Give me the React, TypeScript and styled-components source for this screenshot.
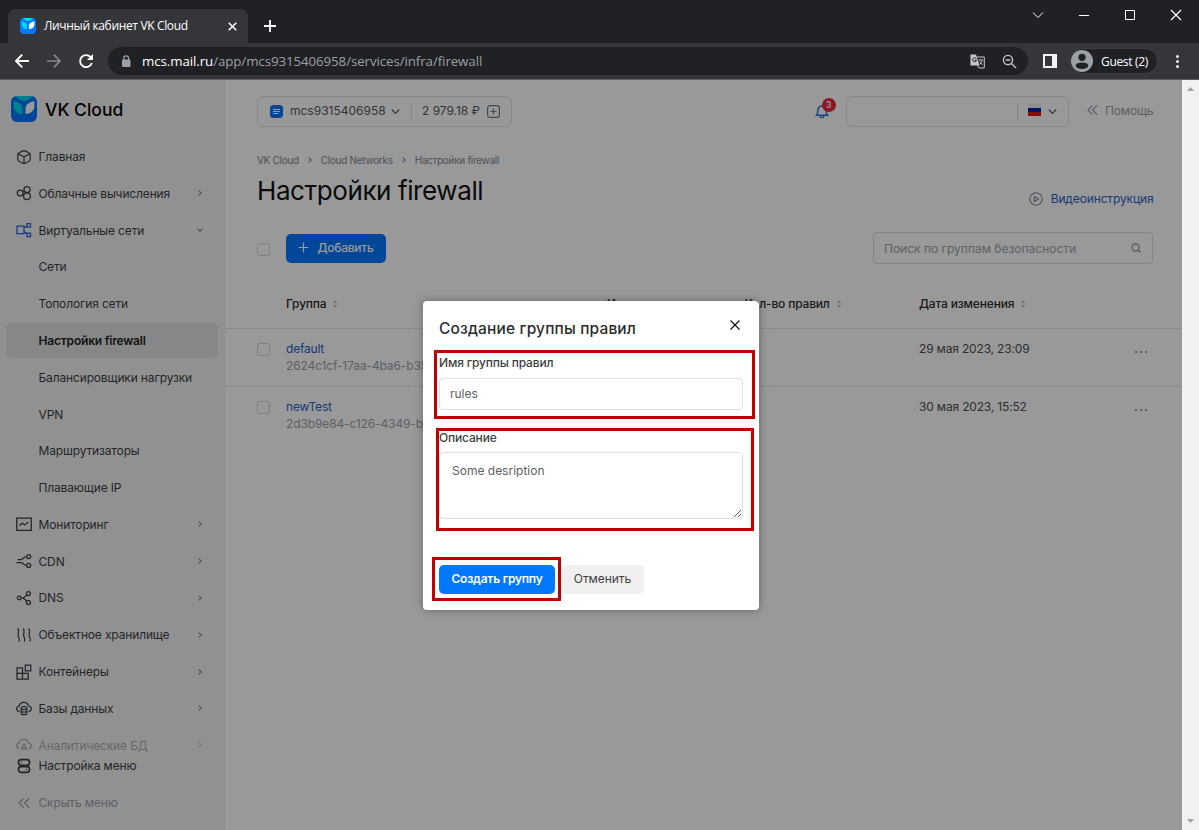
import React from "react";
import styled, { createGlobalStyle, css } from "styled-components";

const GlobalStyle = createGlobalStyle`
  *, *::before, *::after { box-sizing: border-box; }
  body { margin: 0; background: #fff; overflow: hidden; font-family: Inter, sans-serif; }
  svg { display: block; flex: none; }
  button, input, textarea { font-family: inherit; }
`;

/* ---------- browser window ---------- */
const Window = styled.div`
  display: flex;
  flex-direction: column;
  width: 1199px;
  height: 830px;
  overflow: hidden;
`;
const TabStrip = styled.div`
  display: flex;
  height: 43px;
  padding-left: 8px;
  background: #202124;
  font-family: "Open Sans", sans-serif;
`;
const Tab = styled.div`
  display: flex;
  align-items: center;
  width: 240px;
  height: 34px;
  margin-top: 9px;
  padding: 0 11.5px 0 12px;
  border-radius: 8px 8px 0 0;
  background: #35363a;
`;
const TabTitle = styled.span`
  flex: 1;
  margin-left: 8px;
  padding-bottom: 1px;
  color: #fff;
  font-size: 12px;
  letter-spacing: -0.35px;
  white-space: nowrap;
`;
const NewTab = styled.div`
  margin: 20px 0 0 16px;
`;
const WindowControls = styled.div`
  display: flex;
  margin: 9px 17px 0 auto;
  gap: 34px;
`;
const Toolbar = styled.div`
  display: flex;
  align-items: center;
  height: 37px;
  padding: 0 15px 0 14px;
  border-bottom: 1px solid #5b5d61;
  background: #35363a;
  font-family: "Open Sans", sans-serif;
`;
const NavIcons = styled.div`
  display: flex;
  gap: 16px;
`;
const AddressBar = styled.div`
  display: flex;
  align-items: center;
  width: 920px;
  height: 28px;
  margin-left: 14px;
  padding: 0 11px 0 13px;
  border-radius: 14px;
  background: #202124;
`;
const Url = styled.span`
  flex: 1;
  margin-left: 11px;
  color: #9aa0a6;
  font-size: 13.3px;
  letter-spacing: -0.08px;
  white-space: nowrap;
  b { color: #fff; font-weight: 400; }
`;
const AddressIcons = styled.div`
  display: flex;
  align-items: center;
  gap: 17px;
`;
const SidePanelIcon = styled.div`
  width: 14px;
  height: 14px;
  margin-left: 15px;
  border: 2px solid #f1f3f4;
  border-right-width: 5px;
`;
const Profile = styled.div`
  display: flex;
  align-items: center;
  gap: 8px;
  width: 88px;
  height: 26px;
  margin-left: 13px;
  border: 1px solid #3c4043;
  border-radius: 13px;
  background: #202124;
  color: #fff;
  font-size: 12px;
  letter-spacing: -0.33px;
  white-space: nowrap;
`;
const Kebab = styled.div`
  display: grid;
  gap: 2px;
  margin-left: auto;
  margin-right: 5px;
  i { width: 3px; height: 3px; border-radius: 50%; background: #f1f3f4; }
`;
const Viewport = styled.div`
  display: flex;
  flex: 1;
  min-height: 0;
`;
const Page = styled.div`
  position: relative;
  display: flex;
  width: 1182px;
  background: #fff;
`;
const ScrollTrack = styled.div`
  display: flex;
  flex-direction: column;
  align-items: center;
  justify-content: space-between;
  width: 17px;
  padding: 7px 0;
  background: #f1f1f1;
`;

/* ---------- sidebar ---------- */
const Sidebar = styled.aside`
  display: flex;
  flex-direction: column;
  width: 225px;
  background: #f2f2f3;
  border-right: 1px solid #eeeff0;
`;
const Brand = styled.div`
  display: flex;
  align-items: center;
  gap: 8px;
  height: 58.2px;
  padding: 0 0 0.5px 11px;
  color: #000;
  font-size: 17.5px;
  font-weight: 500;
  span { padding-top: 1px; }
`;
const Menu = styled.nav`
  display: flex;
  flex-direction: column;
  height: 616px;
  overflow: hidden;
`;
const MenuRow = styled.div<{ $active?: boolean; $faded?: boolean; $muted?: boolean }>`
  display: flex;
  flex: none;
  align-items: center;
  height: 35px;
  margin: 0.9px 6px 0.9px 6px;
  padding: 0 15.5px 0 9px;
  border-radius: 5px;
  color: ${(p) => (p.$muted ? "#99a2ad" : "#3c3f43")};
  font-size: 12px;
  letter-spacing: -0.15px;
  white-space: nowrap;
  ${(p) => p.$faded && css`opacity: 0.4;`}
  ${(p) => p.$active && css`
    background: #e1e1e2;
    color: #222;
    font-weight: 600;
    letter-spacing: -0.2px;
  `}
`;
const MenuIcon = styled.span<{ $blue?: boolean }>`
  width: 18px;
  margin-right: 5.5px;
  color: ${(p) => (p.$blue ? "#2a5fd5" : "inherit")};
`;
const MenuLabel = styled.span`
  flex: 1;
`;
const MenuArrow = styled.span`
  color: #848c96;
`;
const MenuFooter = styled.div`
  display: flex;
  flex-direction: column;
  margin-top: -6.6px;
`;

/* ---------- main column ---------- */
const Main = styled.main`
  flex: 1;
  min-width: 0;
`;
const TopBar = styled.div`
  display: flex;
  align-items: center;
  height: 31px;
  margin: 16px 28.6px 0 32px;
`;
const OutlineBox = styled.div<{ $w: number }>`
  display: flex;
  align-items: center;
  width: ${(p) => p.$w}px;
  height: 31px;
  border: 1px solid #e1e3e6;
  border-radius: 6px;
  color: #55585c;
  font-size: 12px;
  white-space: nowrap;
`;
const ProjectBadge = styled.span`
  display: grid;
  align-content: center;
  gap: 1px;
  width: 13px;
  height: 13px;
  margin: 0 7px 0 12px;
  padding-left: 3px;
  border-radius: 3.5px;
  background: #07f;
  i { width: 7px; height: 1px; background: #fff; }
  i:last-child { width: 5px; }
`;
const ProjectName = styled.span`
  width: 101px;
  padding-bottom: 2px;
`;
const BoxDivider = styled.span`
  width: 1px;
  height: 16px;
  margin: 0 10px 0 11px;
  background: #dcdee1;
`;
const Balance = styled.span`
  margin-right: 7px;
  padding-bottom: 2px;
  letter-spacing: -0.03px;
`;
const Bell = styled.div`
  position: relative;
  margin: 0 17px 0 auto;
  color: #2a6fd5;
`;
const Badge = styled.span`
  position: absolute;
  top: -6px;
  left: 7px;
  width: 14px;
  height: 14px;
  border-radius: 50%;
  background: #e9273c;
  color: #fff;
  font-size: 8.5px;
  font-weight: 600;
  line-height: 14px;
  text-align: center;
`;
const Flag = styled.span`
  display: flex;
  flex-direction: column;
  width: 13px;
  height: 12px;
  margin: 0 7px 3px 0;
  background: #eee;
  padding-top: 4px;
  i { height: 4px; background: #0024b0; }
  i:last-child { background: #e01708; }
`;
const BoxEnd = styled.div`
  display: flex;
  align-items: center;
  margin-left: auto;
  margin-right: 11px;
`;
const Help = styled.div`
  display: flex;
  align-items: center;
  gap: 7px;
  margin-left: 18.2px;
  padding-bottom: 3px;
  color: #99a2ad;
  font-size: 12px;
  letter-spacing: -0.15px;
`;
const Crumbs = styled.div`
  display: flex;
  align-items: center;
  gap: 8px;
  height: 16px;
  margin: 24.5px 0 0.5px 32px;
  color: #7d8793;
  font-size: 10px;
  letter-spacing: -0.3px;
`;
const TitleRow = styled.div`
  display: flex;
  align-items: flex-start;
  justify-content: space-between;
  height: 64px;
  margin: 0 28.5px 0 32px;
`;
const Title = styled.h1`
  margin: 7px 0 0;
  color: #111;
  font-size: 26px;
  font-weight: 400;
  line-height: 32px;
  letter-spacing: -0.4px;
`;
const VideoLink = styled.a`
  display: flex;
  align-items: center;
  gap: 8px;
  height: 20px;
  margin-top: 20.6px;
  color: #2a5fc2;
  font-size: 12px;
  letter-spacing: -0.13px;
  svg { color: #848c96; }
`;
const Checkbox = styled.span`
  width: 13px;
  height: 13px;
  border: 1px solid #d3d6da;
  border-radius: 3px;
`;
const Actions = styled.div`
  display: flex;
  align-items: center;
  height: 32px;
  margin: 0 29px 0 32px;
  ${Checkbox} { margin-top: 2px; }
`;
const AddButton = styled.button`
  display: flex;
  align-items: center;
  gap: 9px;
  width: 100px;
  height: 29px;
  margin: 1px auto 0 16px;
  padding: 0 0 2px 11.5px;
  border: 0;
  border-radius: 5px;
  background: #07f;
  color: #fff;
  font-size: 12px;
  font-weight: 500;
  letter-spacing: -0.25px;
`;
const Search = styled.div`
  display: flex;
  align-items: center;
  justify-content: space-between;
  width: 280px;
  height: 32px;
  padding: 0 11px 0 10px;
  border: 1px solid #dcdee2;
  border-radius: 4px;
  color: #99a2ad;
  font-size: 12px;
`;
const columns = "29px 321px 137.5px 174.5px 1fr 13px";
const HeadRow = styled.div`
  display: grid;
  grid-template-columns: ${columns};
  align-items: center;
  height: 65px;
  padding: 16px 34px 1px 32px;
  border-bottom: 1px solid #e7e8ec;
  color: #2c2d2e;
  font-size: 12px;
  font-weight: 500;
  letter-spacing: -0.17px;
`;
const HeadCell = styled.span`
  display: flex;
  align-items: center;
  gap: 7px;
  white-space: nowrap;
`;
const Row = styled.div<{ $last?: boolean }>`
  display: grid;
  grid-template-columns: ${columns};
  height: 58px;
  padding: 11px 34px 0 32px;
  border-bottom: 1px solid ${(p) => (p.$last ? "transparent" : "#e7e8ec")};
  color: #4c4f53;
  font-size: 12px;
  line-height: 17px;
  letter-spacing: -0.17px;
  ${Checkbox} { margin-top: 3px; }
`;
const GroupName = styled.div`
  color: #2a5fc2;
  letter-spacing: -0.2px;
`;
const GroupId = styled.div`
  color: #99a2ad;
  letter-spacing: -0.12px;
  white-space: nowrap;
`;
const DateCell = styled.div`
  grid-column: 5;
`;
const Dots = styled.div`
  display: flex;
  gap: 3px;
  margin-top: 11px;
  i { width: 2px; height: 2px; background: #99a2ad; }
`;

/* ---------- dialog ---------- */
const Overlay = styled.div`
  position: absolute;
  inset: 0;
  display: flex;
  align-items: center;
  justify-content: center;
  padding-top: 1px;
  background: rgba(0, 0, 0, 0.4);
`;
const Dialog = styled.div`
  position: relative;
  display: flex;
  flex-direction: column;
  width: 336px;
  height: 309px;
  padding: 16px;
  border-radius: 4px;
  background: #fff;
  box-shadow: 0 0 8px rgba(0, 0, 0, 0.35);
`;
const DialogHead = styled.div`
  display: flex;
  justify-content: space-between;
  height: 37px;
`;
const DialogTitle = styled.h2`
  margin: 0;
  color: #2c2d2e;
  font-size: 15.5px;
  font-weight: 500;
  line-height: 23px;
  letter-spacing: 0.15px;
  white-space: nowrap;
`;
const CloseIcon = styled.div`
  margin: 3px 3px 0 0;
  color: #111;
`;
const Label = styled.label<{ $line: number }>`
  height: 24px;
  color: #3c3f43;
  font-size: 12px;
  font-weight: 500;
  line-height: ${(p) => p.$line}px;
  letter-spacing: -0.17px;
`;
const Input = styled.input`
  width: 304px;
  height: 32px;
  margin-bottom: 18px;
  padding: 0 10px 1px;
  border: 1px solid #dcdfe6;
  border-radius: 4px;
  outline: 0;
  color: #5c5f63;
  font-size: 12px;
`;
const Textarea = styled.textarea`
  width: 304px;
  height: 67px;
  margin: 0 0 46px;
  padding: 8px 12px;
  border: 1px solid #dcdfe6;
  border-radius: 4px;
  outline: 0;
  color: #5c5f63;
  font-size: 12px;
  line-height: 19px;
`;
const Buttons = styled.div`
  display: flex;
  gap: 6px;
`;
const Button = styled.button<{ $primary?: boolean }>`
  width: ${(p) => (p.$primary ? 116 : 83)}px;
  height: 29px;
  padding: 0 0 2px;
  border: 0;
  border-radius: 5px;
  background: ${(p) => (p.$primary ? "#07f" : "#f0f0f0")};
  color: ${(p) => (p.$primary ? "#fff" : "#3c3f43")};
  font-size: 12px;
  font-weight: ${(p) => (p.$primary ? 600 : 400)};
  letter-spacing: ${(p) => (p.$primary ? -0.23 : -0.05)}px;
  white-space: nowrap;
`;
const Highlight = styled.div<{ $x: number; $y: number; $w: number; $h: number }>`
  position: absolute;
  left: ${(p) => p.$x}px;
  top: ${(p) => p.$y}px;
  width: ${(p) => p.$w}px;
  height: ${(p) => p.$h}px;
  border: 3px solid #c00000;
  pointer-events: none;
`;

/* ---------- icons ---------- */
const Logo = ({ size }: { size: number }) => (
  <svg width={size} height={size} viewBox="0 0 26 26">
    <rect width="26" height="26" rx="6" fill="#07f" />
    <path d="M4.500 0H21.500C19.500 2.500 16.500 4.600 13 5C9.500 4.600 6.500 2.500 4.500 0Z" fill="#00d9e9" />
    <path d="M2.600 5.300C7 5.800 11.500 8.500 11.500 12.500V18C7 18 2.600 15 2.600 10Z" fill="#00d9e9" />
    <path d="M23.400 5.300C19 5.800 14.500 8.500 14.500 12.500V18C19 18 23.400 15 23.400 10Z" fill="#fff" />
  </svg>
);

const Chevron = ({ dir, size = 6, w = 1.1 }: { dir: "right" | "down"; size?: number; w?: number }) => (
  <svg width={size} height={size} viewBox="0 0 6 6" fill="none" stroke="currentColor" strokeWidth={w} strokeLinecap="round" strokeLinejoin="round">
    <path d={dir === "right" ? "M2 .8L4.300 3L2 5.200" : "M.8 2L3 4.200L5.200 2"} />
  </svg>
);

const DoubleLeft = () => (
  <svg width="11" height="12" viewBox="0 0 11 12" fill="none" stroke="currentColor" strokeWidth="1.200">
    <path d="M5.300 1.500L1 6L5.300 10.500M10 1.500L5.700 6L10 10.500" />
  </svg>
);

const Sort = () => (
  <svg width="4" height="8" viewBox="0 0 4 8" fill="#a5adb7">
    <path d="M0 2.700L2 .5L4 2.700ZM0 5.300L2 7.500L4 5.300Z" />
  </svg>
);

const shapes: Record<string, React.ReactNode> = {
  home: <path d="M7.800 2.900Q9 2.300 10.200 2.900L14.200 5Q15.200 5.600 15.200 6.700V11.300Q15.200 12.400 14.200 13L10.200 15.200Q9 15.800 7.800 15.200L3.800 13Q2.800 12.400 2.800 11.300V6.700Q2.800 5.600 3.800 5ZM3.200 5.800L9 8.800L14.800 5.800M9 8.800V15.300" />,
  cloud: (
    <>
      <circle cx="5.200" cy="9" r="2.900" />
      <circle cx="12" cy="5.600" r="3.100" />
      <circle cx="12" cy="12.300" r="3.400" />
      <path d="M7.500 7.400L9.200 7M7.500 10.600L8.900 11" />
    </>
  ),
  network: <path d="M2 5H9V12.500H2ZM12 2.500H15.500V6H12ZM12 12H15.500V15.500H12ZM9 7L12 5M9 10.500L12 13" />,
  monitor: <path d="M1.700 3.200H16.300V15.300H1.700ZM4.500 10.800L7.200 8L9.700 10L13.300 7" />,
  cdn: (
    <>
      <circle cx="13.700" cy="4.600" r="2" />
      <circle cx="13.700" cy="13.400" r="2" />
      <path d="M11.700 4.600C8 4.600 8.500 7.500 6 7.500H2.500M11.700 13.400C8 13.400 8.500 10.700 6 10.700H1.500" />
    </>
  ),
  dns: (
    <>
      <circle cx="4.200" cy="9" r="1.800" />
      <circle cx="13.400" cy="4.500" r="2" />
      <circle cx="13.400" cy="13.500" r="2" />
      <path d="M6 9H8L12 6M8 9L12 12" />
    </>
  ),
  storage: <path d="M2.800 2.500C5.300 5.500 1.500 8.500 3.800 11.500C4.500 12.600 4.500 14 4 15.500M8.300 2.500C10.800 5.500 7 8.500 9.300 11.500C10 12.600 10 14 9.500 15.500M13.800 2.500C16.300 5.500 12.500 8.500 14.800 11.500C15.500 12.600 15.500 14 15 15.500" />,
  containers: <path d="M2 4.800H7.500V16H2ZM2 10.300H13.300V16H2M7.500 10.300V16M10.300 2.200H15.800V7.800H10.300Z" />,
  database: (
    <>
      <path d="M4.500 12.500C1 12 .8 7.800 4 7C5.500 2.500 12 2 13.500 7C17.300 7.600 17.300 12 13.500 12.500" />
      <ellipse cx="9" cy="9" rx="2.800" ry="1.500" />
      <path d="M6.200 9V14.200C6.200 16.200 11.800 16.200 11.800 14.200V9M6.200 11.700C6.200 13.500 11.800 13.500 11.800 11.700" />
    </>
  ),
  analytics: <path d="M4.500 12.500C1 12 .8 7.800 4 7C5.500 2.500 12 2 13.500 7C17.300 7.600 17.300 12 13.500 12.500M6.500 14.500L8.300 8H9.700L11.500 14.500M7.200 12.300H10.800" />,
  settings: (
    <>
      <rect x="3.500" y="2.700" width="11" height="5.600" rx="2.500" strokeWidth="1.700" />
      <rect x="3.500" y="9.700" width="11" height="5.600" rx="2.500" strokeWidth="1.700" />
      <path d="M6 5.500H7M11 12.500H12" />
    </>
  ),
  hide: <path d="M8.500 4.500L4 9L8.500 13.500M14 4.500L9.500 9L14 13.500" />,
};

const Glyph = ({ name }: { name: string }) => (
  <svg width="18" height="18" viewBox="0 0 18 18" fill="none" stroke="currentColor" strokeWidth="1.250">
    {shapes[name]}
  </svg>
);

type Item = { label: string; icon?: string; arrow?: "right" | "down"; active?: boolean; faded?: boolean; muted?: boolean; blue?: boolean };

const menu: Item[] = [
  { label: "Главная", icon: "home" },
  { label: "Облачные вычисления", icon: "cloud", arrow: "right" },
  { label: "Виртуальные сети", icon: "network", arrow: "down", blue: true },
  { label: "Сети" },
  { label: "Топология сети" },
  { label: "Настройки firewall", active: true },
  { label: "Балансировщики нагрузки" },
  { label: "VPN" },
  { label: "Маршрутизаторы" },
  { label: "Плавающие IP" },
  { label: "Мониторинг", icon: "monitor", arrow: "right" },
  { label: "CDN", icon: "cdn", arrow: "right" },
  { label: "DNS", icon: "dns", arrow: "right" },
  { label: "Объектное хранилище", icon: "storage", arrow: "right" },
  { label: "Контейнеры", icon: "containers", arrow: "right" },
  { label: "Базы данных", icon: "database", arrow: "right" },
  { label: "Аналитические БД", icon: "analytics", arrow: "right", faded: true },
];
const footer: Item[] = [
  { label: "Настройка меню", icon: "settings" },
  { label: "Скрыть меню", icon: "hide", muted: true },
];

const renderItem = (it: Item) => (
  <MenuRow key={it.label} $active={it.active} $faded={it.faded} $muted={it.muted}>
    <MenuIcon $blue={it.blue}>{it.icon && <Glyph name={it.icon} />}</MenuIcon>
    <MenuLabel>{it.label}</MenuLabel>
    {it.arrow && <MenuArrow><Chevron dir={it.arrow} /></MenuArrow>}
  </MenuRow>
);

const rows = [
  { name: "default", id: "2624c1cf-17aa-4ba6-b35", date: "29 мая 2023, 23:09" },
  { name: "newTest", id: "2d3b9e84-c126-4349-b", date: "30 мая 2023, 15:52" },
];

export default function App() {
  return (
    <Window>
      <GlobalStyle />
      <TabStrip>
        <Tab>
          <Logo size={16} />
          <TabTitle>Личный кабинет VK Cloud</TabTitle>
          <svg width="9" height="9" viewBox="0 0 9 9" stroke="#fff" strokeWidth="1.500"><path d="M.7 .7L8.300 8.300M8.300 .7L.7 8.300" /></svg>
        </Tab>
        <NewTab>
          <svg width="12" height="12" viewBox="0 0 12 12" stroke="#fff" strokeWidth="1.800"><path d="M6 0V12M0 6H12" /></svg>
        </NewTab>
        <WindowControls>
          <svg width="12" height="12" viewBox="0 0 12 12" fill="none" stroke="#fff"><path d="M1 3.500L6 8.500L11 3.500" /></svg>
          <svg width="12" height="12" viewBox="0 0 12 12" stroke="#fff"><path d="M1 6.500H11" /></svg>
          <svg width="12" height="12" viewBox="0 0 12 12" fill="none" stroke="#fff"><path d="M1.500 1.500H10.500V10.500H1.500Z" /></svg>
          <svg width="12" height="12" viewBox="0 0 12 12" stroke="#fff" strokeWidth="1.200"><path d="M1 1L11 11M11 1L1 11" /></svg>
        </WindowControls>
      </TabStrip>
      <Toolbar>
        <NavIcons>
          <svg width="16" height="16" viewBox="0 0 16 16" fill="none" stroke="#fff" strokeWidth="1.900"><path d="M15 8H2.500M8.200 1.700L2 8L8.200 14.300" /></svg>
          <svg width="16" height="16" viewBox="0 0 16 16" fill="none" stroke="#85878a" strokeWidth="1.700"><path d="M1 8H13.500M7.800 1.700L14 8L7.800 14.300" /></svg>
          <svg width="16" height="16" viewBox="0 0 16 16" fill="none" stroke="#fff" strokeWidth="1.900"><path d="M13.800 10A6 6 0 1 1 12.500 4L14 5.500" /><path d="M15 1V7H9Z" fill="#fff" stroke="none" /></svg>
        </NavIcons>
        <AddressBar>
          <svg width="10" height="13" viewBox="0 0 10 13"><rect x="1" y="4.500" width="8.500" height="7.500" rx="1" fill="#9aa0a6" /><path d="M2.800 5V3.200A2.400 2.400 0 0 1 7.600 3.200V5" fill="none" stroke="#9aa0a6" strokeWidth="1.300" /></svg>
          <Url><b>mcs.mail.ru</b>/app/mcs9315406958/services/infra/firewall</Url>
          <AddressIcons>
            <svg width="15" height="15" viewBox="0 0 15 15">
              <path d="M.5 .5H6L9.500 11.500H.5Z" fill="#c4c7c9" />
              <path d="M7 3H14.300V14H9L7.500 11.500" fill="none" stroke="#c4c7c9" />
              <path d="M6.300 4.800A2 2 0 1 0 6.500 6.300H4.500" fill="none" stroke="#202124" />
              <path d="M8.500 6H13M10.700 5V6M12.300 6C12 8.500 10 10 9.500 10.500M9.500 7.500L12.500 11" fill="none" stroke="#c4c7c9" strokeWidth=".9" />
            </svg>
            <svg width="15" height="15" viewBox="0 0 15 15" fill="none" stroke="#c4c7c9" strokeWidth="1.400"><circle cx="6" cy="6" r="4.600" /><path d="M9.500 9.500L14 14M3.700 6H8.300" /></svg>
          </AddressIcons>
        </AddressBar>
        <SidePanelIcon />
        <Profile>
          <svg width="22" height="22" viewBox="0 0 22 22"><circle cx="11" cy="11" r="11" fill="#9aa0a6" /><circle cx="11" cy="7.300" r="3.600" fill="#202124" /><ellipse cx="11" cy="15.700" rx="6.300" ry="3.300" fill="#202124" /></svg>
          Guest (2)
        </Profile>
        <Kebab><i /><i /><i /></Kebab>
      </Toolbar>
      <Viewport>
        <Page>
          <Sidebar>
            <Brand><Logo size={26} /><span>VK Cloud</span></Brand>
            <Menu>{menu.map(renderItem)}</Menu>
            <MenuFooter>{footer.map(renderItem)}</MenuFooter>
          </Sidebar>
          <Main>
            <TopBar>
              <OutlineBox $w={255}>
                <ProjectBadge><i /><i /><i /></ProjectBadge>
                <ProjectName>mcs9315406958</ProjectName>
                <Chevron dir="down" size={9} w={0.8} />
                <BoxDivider />
                <Balance>2 979.18 ₽</Balance>
                <svg width="13" height="13" viewBox="0 0 13 13" fill="none" stroke="#6d7885" strokeWidth="1.200"><rect x=".6" y=".6" width="11.800" height="11.800" rx="2.500" /><path d="M6.500 3.500V9.500M3.500 6.500H9.500" /></svg>
              </OutlineBox>
              <Bell>
                <svg width="14" height="15" viewBox="0 0 14 15" fill="none" stroke="currentColor" strokeWidth="1.400"><path d="M1.500 11.200C3 9.500 2.800 8 3 6C3.300 3.500 4.800 2 7 2C9.200 2 10.700 3.500 11 6C11.200 8 11 9.500 12.500 11.200ZM5 11.500C5.200 14.300 8.800 14.300 9 11.500" /></svg>
                <Badge>3</Badge>
              </Bell>
              <OutlineBox $w={223}>
                <BoxEnd>
                  <BoxDivider />
                  <Flag><i /><i /></Flag>
                  <Chevron dir="down" size={9} w={0.8} />
                </BoxEnd>
              </OutlineBox>
              <Help><DoubleLeft />Помощь</Help>
            </TopBar>
            <Crumbs>
              <span>VK Cloud</span><Chevron dir="right" />
              <span>Cloud Networks</span><Chevron dir="right" />
              <span>Настройки firewall</span>
            </Crumbs>
            <TitleRow>
              <Title>Настройки firewall</Title>
              <VideoLink>
                <svg width="14" height="14" viewBox="0 0 14 14" fill="none" stroke="currentColor" strokeWidth="1.100"><circle cx="7" cy="7" r="6.200" /><path d="M5.300 4.500L9.500 7L5.300 9.500Z" /></svg>
                Видеоинструкция
              </VideoLink>
            </TitleRow>
            <Actions>
              <Checkbox />
              <AddButton>
                <svg width="11" height="11" viewBox="0 0 11 11" stroke="#fff" strokeWidth="1.200"><path d="M5.500 .5V10.500M.5 5.500H10.500" /></svg>
                Добавить
              </AddButton>
              <Search>
                Поиск по группам безопасности
                <svg width="10" height="10" viewBox="0 0 10 10" fill="none" stroke="#848c96" strokeWidth="1.100"><circle cx="4.500" cy="4.500" r="3.600" /><path d="M7.200 7.200L9.500 9.500" /></svg>
              </Search>
            </Actions>
            <HeadRow>
              <span />
              <HeadCell>Группа<Sort /></HeadCell>
              <HeadCell>Инстансы</HeadCell>
              <HeadCell>Кол-во правил<Sort /></HeadCell>
              <HeadCell>Дата изменения<Sort /></HeadCell>
            </HeadRow>
            {rows.map((r, i) => (
              <Row key={r.id} $last={i === rows.length - 1}>
                <Checkbox />
                <div>
                  <GroupName>{r.name}</GroupName>
                  <GroupId>{r.id}</GroupId>
                </div>
                <DateCell>{r.date}</DateCell>
                <Dots><i /><i /><i /></Dots>
              </Row>
            ))}
          </Main>
          <Overlay>
            <Dialog>
              <DialogHead>
                <DialogTitle>Создание группы правил</DialogTitle>
                <CloseIcon>
                  <svg width="10" height="10" viewBox="0 0 10 10" stroke="currentColor" strokeWidth="1.200"><path d="M.5 .5L9.500 9.500M9.500 .5L.5 9.500" /></svg>
                </CloseIcon>
              </DialogHead>
              <Label $line={18}>Имя группы правил</Label>
              <Input defaultValue="rules" />
              <Label $line={19}>Описание</Label>
              <Textarea defaultValue="Some desription" />
              <Buttons>
                <Button $primary>Создать группу</Button>
                <Button>Отменить</Button>
              </Buttons>
              <Highlight $x={11} $y={49} $w={321} $h={69} />
              <Highlight $x={13} $y={127} $w={318} $h={103} />
              <Highlight $x={9} $y={256} $w={129} $h={44} />
            </Dialog>
          </Overlay>
        </Page>
        <ScrollTrack>
          <svg width="7" height="4" viewBox="0 0 7 4" fill="#a3a3a3"><path d="M0 4L3.500 0L7 4Z" /></svg>
          <svg width="7" height="4" viewBox="0 0 7 4" fill="#a3a3a3"><path d="M0 0L3.500 4L7 0Z" /></svg>
        </ScrollTrack>
      </Viewport>
    </Window>
  );
}
